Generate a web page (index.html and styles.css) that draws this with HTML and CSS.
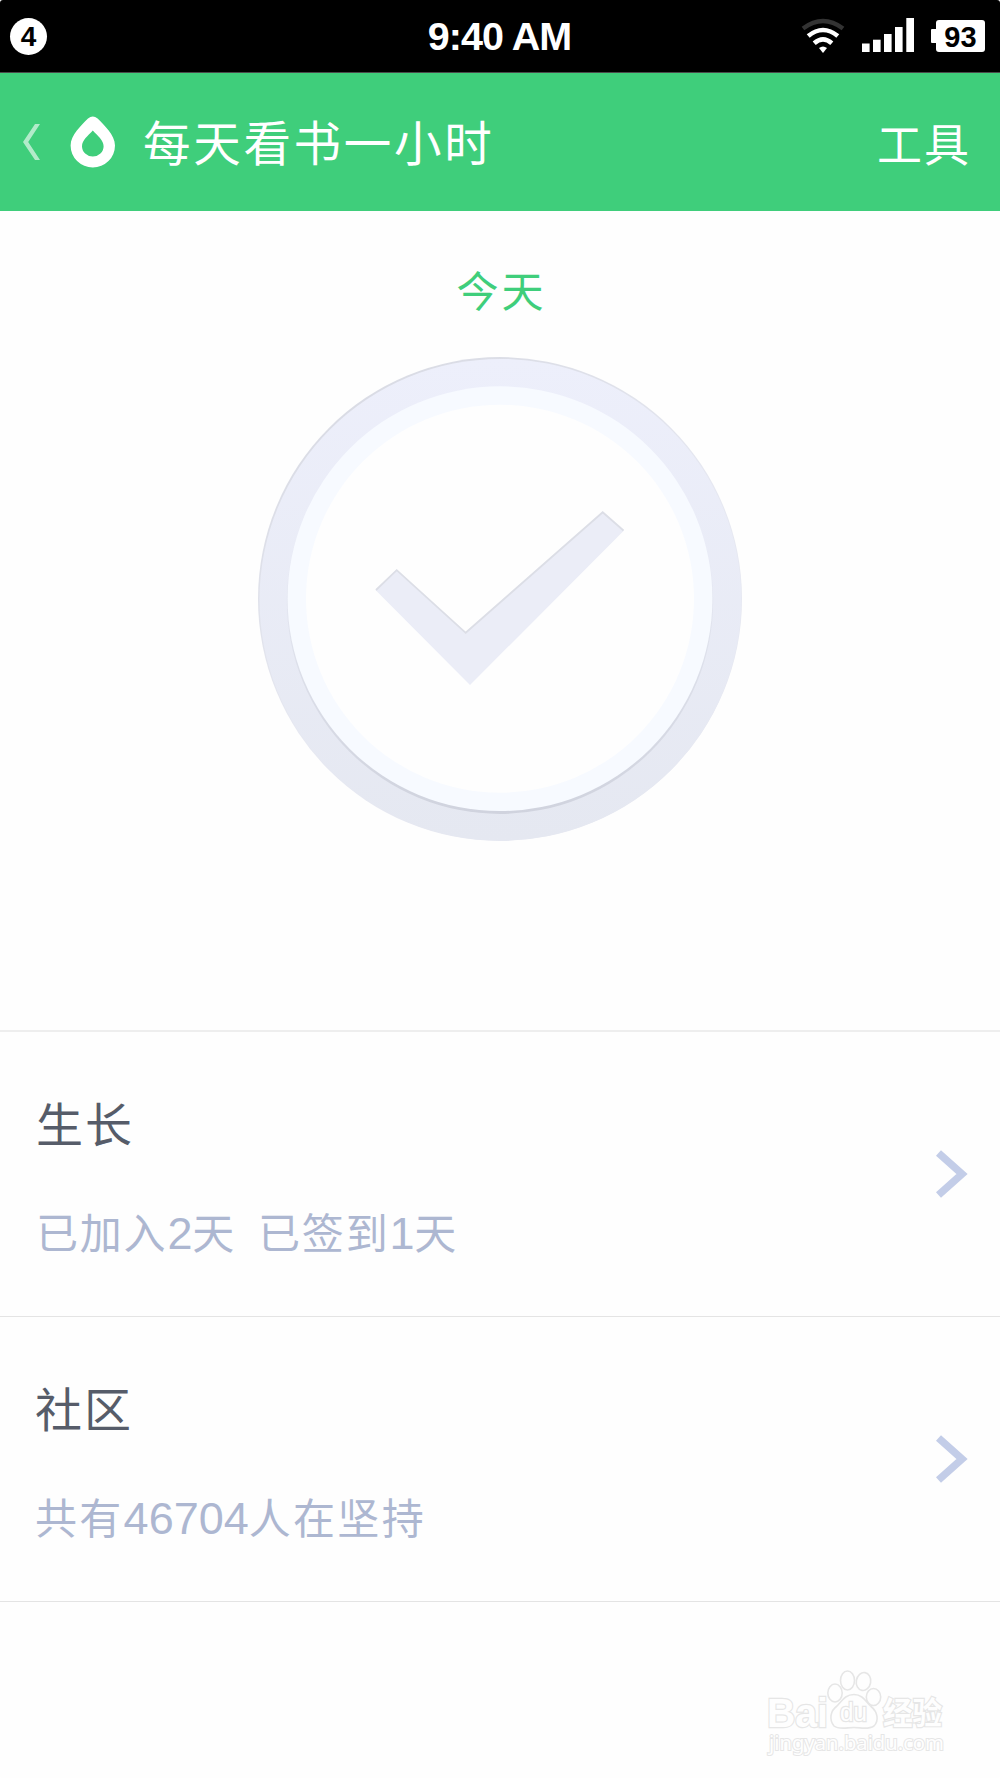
FILE: index.html
```html
<!DOCTYPE html>
<html lang="zh-CN">
<head>
    <meta charset="UTF-8">
    <meta name="viewport" content="width=device-width, initial-scale=1.0">
    <title>每天看书一小时</title>
    <link rel="stylesheet" href="styles.css">
</head>
<body>
    <div class="app">
        <div class="status-bar">
            <div class="status-left"><span class="notice-count">4</span></div>
            <div class="clock">9:40 AM</div>
            <div class="status-right">
                <svg class="wifi" width="44" height="36" viewBox="0 0 44 36" fill="none" stroke="#fff" stroke-width="4.6">
                    <path d="M2 10.5 Q22 -4.5 42 10.5" stroke="#333" stroke-width="4.4"/>
                    <path d="M7.2 18 Q22 6 36.8 18"/>
                    <path d="M13.2 25.3 Q22 17.5 30.8 25.3"/>
                    <path d="M18 30 Q22 27 26 30 L22 35 Z" fill="#fff" stroke="none"/>
                </svg>
                <svg class="signal" width="52" height="34" viewBox="0 0 52 34" fill="#fff">
                    <rect x="0" y="25.5" width="7.6" height="8.5"/>
                    <rect x="11" y="21.7" width="7.6" height="12.3"/>
                    <rect x="22" y="16" width="7.6" height="18"/>
                    <rect x="33" y="9" width="7.6" height="25"/>
                    <rect x="44.3" y="0" width="7.7" height="34"/>
                </svg>
                <div class="battery">93</div>
            </div>
        </div>

        <div class="header">
            <svg class="back" width="18" height="38" viewBox="0 0 18 38">
                <path d="M12 1 H17 L5.2 19 L17 37 H12 L0 19 Z" fill="#fff" fill-opacity="0.6"/>
            </svg>
            <svg class="drop" width="46" height="52" viewBox="0 0 46 52">
                <path fill="#fff" fill-rule="evenodd" d="M18 2.5 Q22.8 -1.5 27.600 2.5 C34 9 45 19 45 29.500 A22.200 22 0 0 1 0.600 29.500 C0.600 19 11.600 9 18 2.500 Z M22.800 14.500 C18 19.500 12 24.500 12 30.200 A10.800 10.400 0 0 0 33.600 30.200 C33.600 24.500 27.600 19.500 22.800 14.500 Z"/>
            </svg>
            <h1 class="title">每天看书一小时</h1>
            <a class="tools">工具</a>
        </div>

        <div class="checkin">
            <div class="day">今天</div>
            <svg class="check-circle" width="486" height="486" viewBox="257 356 486 486">
                <defs>
                    <linearGradient id="ring" x1="0" y1="0" x2="0" y2="1">
                        <stop offset="0" stop-color="#edeffb"/>
                        <stop offset="1" stop-color="#e5e8f1"/>
                    </linearGradient>
                    <linearGradient id="ring-edge" x1="0.2" y1="0" x2="0.65" y2="0.75">
                        <stop offset="0" stop-color="#d8dae3"/>
                        <stop offset="0.7" stop-color="#e6e8f1"/>
                        <stop offset="1" stop-color="#e6e8f1"/>
                    </linearGradient>
                    <linearGradient id="inner-edge" x1="0" y1="0" x2="0" y2="1">
                        <stop offset="0.35" stop-color="#d0d3de" stop-opacity="0"/>
                        <stop offset="1" stop-color="#d0d3de"/>
                    </linearGradient>
                </defs>
                <circle cx="500" cy="599" r="242" fill="url(#ring-edge)"/>
                <circle cx="500.4" cy="599.8" r="240.9" fill="url(#ring)"/>
                <circle cx="500" cy="600.7" r="213.2" fill="url(#inner-edge)"/>
                <circle cx="500" cy="598.7" r="212.4" fill="#f7faff"/>
                <circle cx="500" cy="598.7" r="194" fill="#fefefe"/>
                <path d="M375.5 590 L396.7 569.5 L465.7 632 L602.7 511.5 L624 530.5 L470 685 Z" fill="#ebedf7"/>
                <path d="M376 590 L396.7 570.2 L465.7 632.8 L602.7 512.2 L623.5 530.5" fill="none" stroke="#dcdee6" stroke-width="1.8"/>
            </svg>
        </div>

        <div class="row growth">
            <div class="row-text">
                <h2>生长</h2>
                <p>已加入<span class="num">2</span>天<span class="gap"></span>已签到<span class="num">1</span>天</p>
            </div>
            <svg class="arrow" width="32" height="48" viewBox="0 0 32 48">
                <path d="M2.500 3 L26 24 L2.500 45" fill="none" stroke="#c3cde8" stroke-width="7.500"/>
            </svg>
        </div>
        <div class="row community">
            <div class="row-text">
                <h2>社区</h2>
                <p>共有<span class="num">46704</span>人在坚持</p>
            </div>
            <svg class="arrow" width="32" height="48" viewBox="0 0 32 48">
                <path d="M2.500 3 L26 24 L2.500 45" fill="none" stroke="#c3cde8" stroke-width="7.500"/>
            </svg>
        </div>

        <div class="footer">
            <svg class="watermark" width="184" height="92" viewBox="764 1668 184 92" fill="#fefefe" stroke="#e6e6e6" stroke-width="1.6">
                <text class="wm-logo" x="767" y="1727" textLength="61" lengthAdjust="spacingAndGlyphs">Bai</text>
                <ellipse cx="835" cy="1693" rx="7.2" ry="9"/>
                <ellipse cx="847.5" cy="1680.5" rx="7" ry="9.5"/>
                <ellipse cx="863.5" cy="1681.5" rx="7.2" ry="9" transform="rotate(10 863.5 1681.5)"/>
                <ellipse cx="873.5" cy="1697" rx="7.2" ry="8.5"/>
                <path d="M854 1694.500 C863 1694.500 866 1702 871 1706.500 C878 1712 879 1721 874 1726 C868 1730 861 1727.500 854 1727.500 C847 1727.500 839 1730 834 1726 C829 1720 830 1711 837 1706 C842 1701 845 1694.500 854 1694.500 Z"/>
                <text class="wm-du" x="840" y="1721" textLength="27" lengthAdjust="spacingAndGlyphs">du</text>
                <text class="wm-cn" x="883" y="1724" textLength="59" lengthAdjust="spacingAndGlyphs">经验</text>
                <text class="wm-url" x="769" y="1750" textLength="175" lengthAdjust="spacingAndGlyphs">jingyan.baidu.com</text>
            </svg>
        </div>
    </div>
</body>
</html>
```

FILE: styles.css
```css
* {
    box-sizing: border-box;
}

body {
    margin: 0;
    background-color: #fff;
    font-family: "Liberation Sans", "Noto Sans CJK SC", sans-serif;
}

.app {
    width: 1000px;
    height: 1778px;
    display: flex;
    flex-direction: column;
    background-color: #fefefe;
    border-radius: 3px;
    overflow: hidden;
}

.status-bar {
    height: 73px;
    flex: none;
    display: grid;
    grid-template-columns: 1fr auto 1fr;
    align-items: center;
    padding: 0 15px 0 10px;
    background-color: #000;
    border-bottom: 1px solid #4a4a4a;
    color: #fff;
}

.notice-count {
    display: block;
    width: 37px;
    height: 37px;
    border-radius: 50%;
    background-color: #fff;
    color: #000;
    font-size: 28px;
    font-weight: bold;
    line-height: 38px;
    text-align: center;
}

.clock {
    padding: 0 0 1px 4px;
    font-size: 39.5px;
    font-weight: bold;
    line-height: 44px;
    letter-spacing: -0.9px;
}

.status-right {
    display: flex;
    justify-content: flex-end;
    align-items: center;
}

.wifi {
    margin-right: 17px;
}

.signal {
    margin-right: 22px;
    margin-top: -2px;
}

.battery {
    position: relative;
    width: 49px;
    height: 32px;
    border-radius: 3px;
    background-color: #fff;
    color: #000;
    font-size: 29px;
    font-weight: bold;
    line-height: 34px;
    text-align: center;
}

.battery::before {
    content: "";
    position: absolute;
    left: -5px;
    top: 9px;
    width: 6px;
    height: 14px;
    border-radius: 1px;
    background-color: #fff;
}

.header {
    height: 138px;
    flex: none;
    display: flex;
    align-items: center;
    padding: 0 29px 0 23px;
    background-color: #3fce7b;
    color: #fff;
}

.drop {
    margin-left: 29px;
}

.title {
    margin: 0 auto 0 27px;
    padding-top: 5px;
    font-size: 47.5px;
    font-weight: normal;
    line-height: 60px;
    letter-spacing: 2.7px;
}

.tools {
    padding-top: 9px;
    font-size: 45px;
    line-height: 60px;
    letter-spacing: 2px;
}

.checkin {
    height: 819px;
    flex: none;
    display: flex;
    flex-direction: column;
    align-items: center;
    padding-top: 52px;
}

.day {
    padding-left: 3px;
    color: #3fce7b;
    font-size: 42px;
    line-height: 60px;
    letter-spacing: 3px;
}

.check-circle {
    margin-top: 33px;
}

.row {
    height: 285px;
    flex: none;
    display: flex;
    justify-content: space-between;
    align-items: center;
    padding: 0 32px 0 36px;
    border-top: 1px solid #e4e4e4;
}

.growth {
    height: 286px;
    border-top: 2px solid #eeeeee;
}

.community {
    padding-left: 35px;
}

.row-text {
    padding-top: 12px;
}

.row h2 {
    margin: 0 0 48px;
    color: #565c69;
    font-size: 47px;
    font-weight: normal;
    line-height: 60px;
    letter-spacing: 2px;
}

.row p {
    margin: 0;
    color: #adb7d1;
    font-size: 42px;
    line-height: 60px;
    letter-spacing: 1.8px;
}

.num {
    font-size: 45px;
    letter-spacing: -0.2px;
}

.community p {
    letter-spacing: 2.3px;
}

.community .num {
    letter-spacing: 0;
}

.gap {
    display: inline-block;
    width: 22px;
}

.footer {
    flex: 1;
    display: flex;
    justify-content: flex-end;
    align-items: flex-end;
    padding: 0 52px 18px 0;
    border-top: 1px solid #e4e4e4;
}

.watermark text {
    paint-order: stroke;
    stroke-width: 2.4px;
}

.wm-logo {
    font-family: "Liberation Sans", sans-serif;
    font-size: 41px;
    font-weight: bold;
}

.wm-du {
    font-family: "Liberation Sans", sans-serif;
    font-size: 25px;
}

.wm-cn {
    font-family: "Noto Sans CJK SC", sans-serif;
    font-size: 31px;
    font-weight: bold;
}

.watermark .wm-url {
    font-family: "Noto Sans", sans-serif;
    font-size: 20px;
    stroke-width: 2px;
}
```
